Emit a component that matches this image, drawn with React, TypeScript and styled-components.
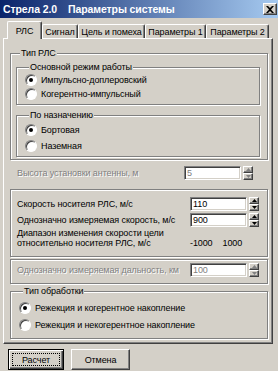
import React, { FC } from "react";
import styled, { createGlobalStyle, css } from "styled-components";

const GlobalStyle = createGlobalStyle`
  html, body {
    margin: 0;
    padding: 0;
    background: #d4d0c8;
    overflow: hidden;
  }
  body {
    font-family: "Liberation Sans", Arial, sans-serif;
    font-size: 9px;
    letter-spacing: -0.1px;
    color: #000;
  }
`;

const raised = css`
  border: 1px solid;
  border-color: #fff #404040 #404040 #fff;
  box-shadow: inset -1px -1px 0 #808080;
`;

const sunken = css`
  border: 1px solid;
  border-color: #808080 #fff #fff #808080;
  box-shadow: inset 1px 1px 0 #404040, inset -1px -1px 0 #d4d0c8;
`;

const Arrow: FC<{ up?: boolean; disabled?: boolean }> = ({ up, disabled }) => (
  <svg width="5" height="3" viewBox="0 0 5 3">
    <polygon
      points={up ? "0,3 2.5,0 5,3" : "0,0 5,0 2.5,3"}
      fill={disabled ? "#808080" : "#000"}
    />
  </svg>
);

const Spin: FC<{ value: string; disabled?: boolean }> = ({ value, disabled }) => (
  <SpinWrapper>
    <EditBox $disabled={disabled}>{value}</EditBox>
    <SpinButtons>
      <SpinButton>
        <Arrow up disabled={disabled} />
      </SpinButton>
      <SpinButton>
        <Arrow disabled={disabled} />
      </SpinButton>
    </SpinButtons>
  </SpinWrapper>
);

const Radio: FC<{ label: string; checked?: boolean; height?: number }> = ({
  label,
  checked,
  height = 14,
}) => (
  <RadioRow $height={height}>
    <RadioCircle $checked={checked} />
    <span>{label}</span>
  </RadioRow>
);

const tabs = [
  { label: "РЛС", width: 35 },
  { label: "Сигнал", width: 36 },
  { label: "Цель и помеха", width: 67 },
  { label: "Параметры 1", width: 61 },
  { label: "Параметры 2", width: 63 },
];

export default function App() {
  return (
    <>
      <GlobalStyle />
      <Window>
        <TitleBar>
          <TitleText>
            <span>Стрела 2.0</span>
            <span>Параметры системы</span>
          </TitleText>
          <CloseButton>
            <svg width="8" height="7" viewBox="0 0 8 7">
              <path d="M0 0h2l2 2 2-2h2L5 3.5 8 7H6L4 5 2 7H0l3-3.5z" fill="#000" />
            </svg>
          </CloseButton>
        </TitleBar>

        <Tabs>
          {tabs.map((t, i) => (
            <Tab key={t.label} $active={i === 0} $width={t.width}>
              {t.label}
            </Tab>
          ))}
        </Tabs>

        <Panel>
          <Group $mt={8} $pad="1px 7px 2px 5px">
            <Legend>Тип РЛС</Legend>
            <Group $mt={1} $pad="0 0 3px 8px">
              <Legend>Основной режим работы</Legend>
              <Radio label="Импульсно-доплеровский" checked />
              <Radio label="Когерентно-импульсный" />
            </Group>
            <Group $mt={4} $pad="1px 0 2px 8px">
              <Legend>По назначению</Legend>
              <Radio label="Бортовая" checked height={16} />
              <Radio label="Наземная" height={16} />
            </Group>
          </Group>

          <FieldRow $mt={6} $ml={7} $mr={15}>
            <Label $disabled>Высота установки антенны, м</Label>
            <Spin value="5" disabled />
          </FieldRow>

          <Group $mt={9} $pad="7px 8px 8px 6px">
            <FieldRow>
              <Label>Скорость носителя РЛС, м/с</Label>
              <Spin value="110" />
            </FieldRow>
            <FieldRow $mt={2}>
              <Label>Однозначно измеряемая скорость, м/с</Label>
              <Spin value="900" />
            </FieldRow>
            <RangeRow>
              <RangeLabel>
                Диапазон изменения скорости цели
                <br />
                относительно носителя РЛС, м/с
              </RangeLabel>
              <RangeValues>
                <span>-1000</span>
                <span>1000</span>
              </RangeValues>
            </RangeRow>
          </Group>

          <Group $mt={2} $pad="3px 8px 6px 6px">
            <FieldRow>
              <Label $disabled>Однозначно измеряемая дальность, км</Label>
              <Spin value="100" disabled />
            </FieldRow>
          </Group>

          <Group $mt={1} $pad="2px 7px 5px 8px">
            <Legend>Тип обработки</Legend>
            <Radio label="Режекция и когерентное накопление" checked height={17} />
            <Radio label="Режекция и некогерентное накопление" height={17} />
          </Group>
        </Panel>

        <ButtonBar>
          <PushButton $default>Расчет</PushButton>
          <PushButton>Отмена</PushButton>
        </ButtonBar>
      </Window>
    </>
  );
}

const Window = styled.div`
  width: 278px;
  height: 371px;
  background: #d4d0c8;
  box-sizing: border-box;
`;

const TitleBar = styled.div`
  height: 18px;
  display: flex;
  align-items: center;
  justify-content: space-between;
  padding: 0 1px 0 3px;
  background: linear-gradient(to right, #0a246a, #a6caf0);
`;

const TitleText = styled.div`
  display: flex;
  gap: 11px;
  color: #fff;
  font-weight: bold;
  font-size: 10.5px;
  letter-spacing: -0.1px;
  white-space: nowrap;
`;

const CloseButton = styled.div`
  width: 14px;
  height: 12px;
  box-sizing: border-box;
  background: #d4d0c8;
  ${raised};
  display: flex;
  align-items: center;
  justify-content: center;
`;

const Tabs = styled.div`
  display: flex;
  align-items: flex-end;
  height: 20px;
  padding-left: 7px;
  position: relative;
  z-index: 1;
`;

const Tab = styled.div<{ $active?: boolean; $width: number }>`
  width: ${(p) => p.$width}px;
  height: ${(p) => (p.$active ? 18 : 14)}px;
  margin-bottom: ${(p) => (p.$active ? -1 : 0)}px;
  box-sizing: border-box;
  display: flex;
  align-items: center;
  justify-content: center;
  background: #d4d0c8;
  border-top: 1px solid #fff;
  border-left: 1px solid #fff;
  border-right: 1px solid #404040;
  box-shadow: inset -1px 0 0 #808080;
  border-radius: 2px 2px 0 0;
  white-space: nowrap;
  position: relative;
  z-index: ${(p) => (p.$active ? 2 : 0)};
`;

const Panel = styled.div`
  margin: 0 5px 0 3px;
  height: 306px;
  box-sizing: border-box;
  padding: 0 4px 0 6px;
  border: 1px solid;
  border-color: #fff #404040 #404040 #fff;
  box-shadow: inset -1px -1px 0 #808080;
  display: flex;
  flex-direction: column;
`;

const Group = styled.fieldset<{ $mt?: number; $pad: string }>`
  margin: ${(p) => p.$mt ?? 0}px 0 0;
  padding: ${(p) => p.$pad};
  border: 1px solid #808080;
  box-shadow: inset 1px 1px 0 #fff, 1px 1px 0 #fff;
  min-width: 0;
  display: flex;
  flex-direction: column;
`;

const Legend = styled.legend`
  padding: 0 1px;
  margin-left: 4px;
  line-height: 12px;
  background: #d4d0c8;
`;

const RadioRow = styled.div<{ $height: number }>`
  height: ${(p) => p.$height}px;
  display: flex;
  align-items: center;
  gap: 4px;
  white-space: nowrap;
`;

const RadioCircle = styled.span<{ $checked?: boolean }>`
  width: 12px;
  height: 12px;
  box-sizing: border-box;
  border-radius: 50%;
  background: #fff;
  border: 1px solid;
  border-color: #808080 #fff #fff #808080;
  box-shadow: inset 1px 1px 0 #404040;
  display: flex;
  align-items: center;
  justify-content: center;
  flex: none;
  &::after {
    content: "";
    width: 4px;
    height: 4px;
    border-radius: 50%;
    background: ${(p) => (p.$checked ? "#000" : "transparent")};
  }
`;

const FieldRow = styled.div<{ $mt?: number; $ml?: number; $mr?: number }>`
  display: flex;
  align-items: center;
  margin: ${(p) => p.$mt ?? 0}px ${(p) => p.$mr ?? 0}px 0 ${(p) => p.$ml ?? 0}px;
`;

const Label = styled.span<{ $disabled?: boolean }>`
  flex: 1;
  white-space: nowrap;
  color: ${(p) => (p.$disabled ? "#808080" : "#000")};
  text-shadow: ${(p) => (p.$disabled ? "1px 1px 0 #fff" : "none")};
`;

const SpinWrapper = styled.div`
  display: flex;
  align-items: stretch;
  gap: 2px;
`;

const EditBox = styled.div<{ $disabled?: boolean }>`
  width: 57px;
  height: 14px;
  box-sizing: border-box;
  ${sunken};
  background: #fff;
  padding: 0 2px;
  line-height: 12px;
  color: ${(p) => (p.$disabled ? "#808080" : "#000")};
`;

const SpinButtons = styled.div`
  display: flex;
  flex-direction: column;
`;

const SpinButton = styled.div`
  width: 10px;
  height: 7px;
  box-sizing: border-box;
  ${raised};
  background: #d4d0c8;
  display: flex;
  align-items: center;
  justify-content: center;
`;

const RangeRow = styled.div`
  display: flex;
  align-items: flex-end;
  margin-top: 1px;
`;

const RangeLabel = styled.div`
  flex: 1;
  line-height: 10px;
  white-space: nowrap;
`;

const RangeValues = styled.div`
  width: 69px;
  display: flex;
  gap: 10px;
  padding-left: 2px;
  line-height: 10px;
`;

const ButtonBar = styled.div`
  display: flex;
  gap: 7px;
  padding: 5px 0 0 8px;
`;

const PushButton = styled.div<{ $default?: boolean }>`
  height: 21px;
  box-sizing: border-box;
  display: flex;
  align-items: center;
  justify-content: center;
  background: #d4d0c8;
  position: relative;
  ${(p) =>
    p.$default
      ? css`
          width: 56px;
          border: 1px solid #000;
          box-shadow: inset 1px 1px 0 #fff, inset -1px -1px 0 #404040,
            inset -2px -2px 0 #808080;
          &::after {
            content: "";
            position: absolute;
            inset: 3px;
            border: 1px dotted #000;
          }
        `
      : css`
          width: 59px;
          ${raised};
        `}
`;
